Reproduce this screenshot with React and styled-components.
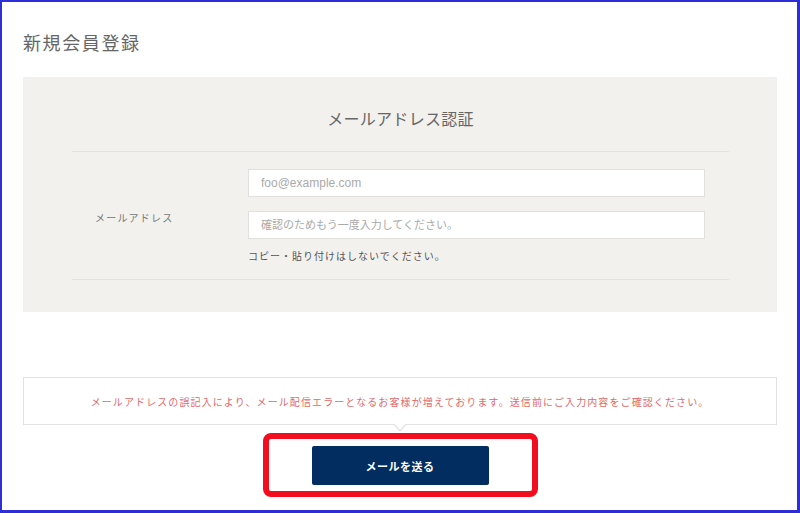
import React from "react";
import styled, { createGlobalStyle } from "styled-components";

const GlobalStyle = createGlobalStyle`
  html, body { margin: 0; padding: 0; background: #ffffff; }
  * { box-sizing: border-box; }
`;

const Frame = styled.div`
  width: 800px;
  height: 513px;
  border-style: solid;
  border-color: #2e2ed8;
  border-width: 2px 3px 3px 2px;
  padding: 0 20px 0 21px;
  font-family: "Liberation Sans", "Noto Sans CJK JP", sans-serif;
  color: #555;
  overflow: hidden;
`;

const Title = styled.h1`
  margin: 29px 0 20px 0;
  font-size: 18px;
  line-height: 26px;
  font-weight: normal;
  letter-spacing: 1.6px;
  color: #666;
`;

const Panel = styled.section`
  background: #f2f1ee;
  height: 235px;
  padding: 31px 48px 0 49px;
`;

const PanelHeading = styled.h2`
  margin: 0 0 19px 0;
  font-size: 16px;
  line-height: 24px;
  font-weight: normal;
  text-align: center;
  letter-spacing: 0.3px;
  color: #666;
`;

const FieldRow = styled.div`
  display: flex;
  align-items: center;
  border-top: 1px solid #e4e2df;
  border-bottom: 1px solid #e4e2df;
  padding: 17px 24px 14px 0;
`;

const Label = styled.div`
  width: 176px;
  padding-left: 23px;
  font-size: 10px;
  letter-spacing: 1.2px;
  color: #777;
`;

const Inputs = styled.div`
  flex: 1;
  display: flex;
  flex-direction: column;
  gap: 14px;
`;

const TextInput = styled.input`
  width: 100%;
  height: 28px;
  border: 1px solid #e2e0dc;
  background: #fff;
  padding: 0 12px;
  font-family: "Liberation Sans", "Noto Sans CJK JP", sans-serif;
  font-size: ${(p) => p.$size}px;
  color: #333;
  outline: none;
  &::placeholder { color: #aaa; }
`;

const Note = styled.p`
  margin: -4px 0 0 0;
  font-size: 10px;
  line-height: 16px;
  letter-spacing: 1px;
  color: #555;
`;

const Notice = styled.div`
  position: relative;
  margin-top: 65px;
  height: 48px;
  border: 1px solid #e3e3e3;
  display: flex;
  align-items: center;
  justify-content: center;
  font-size: 10px;
  letter-spacing: 1.1px;
  color: #e26a6a;

  &::before, &::after {
    content: "";
    position: absolute;
    left: 50%;
    transform: translateX(-50%);
    width: 0;
    height: 0;
    border-style: solid;
  }
  &::before {
    bottom: -8px;
    border-width: 8px 7px 0 7px;
    border-color: #e3e3e3 transparent transparent transparent;
  }
  &::after {
    bottom: -6px;
    border-width: 7px 6px 0 6px;
    border-color: #fff transparent transparent transparent;
  }
`;

const Actions = styled.div`
  display: flex;
  justify-content: center;
  margin-top: 8px;
`;

const Highlight = styled.div`
  border: 6px solid #f20d1f;
  border-radius: 8px;
  padding: 7px 43px 6px 43px;
`;

const SendButton = styled.button`
  width: 177px;
  height: 39px;
  border: none;
  border-radius: 2px;
  background: #022d60;
  color: #fff;
  font-family: "Liberation Sans", "Noto Sans CJK JP", sans-serif;
  font-size: 11px;
  font-weight: bold;
  letter-spacing: 0.5px;
  cursor: pointer;
`;

export default function App() {
  return (
    <>
      <GlobalStyle />
      <Frame>
        <Title>新規会員登録</Title>
        <Panel>
          <PanelHeading>メールアドレス認証</PanelHeading>
          <FieldRow>
            <Label>メールアドレス</Label>
            <Inputs>
              <TextInput $size={12} type="email" placeholder="foo@example.com" />
              <TextInput $size={11} type="email" placeholder="確認のためもう一度入力してください。" />
              <Note>コピー・貼り付けはしないでください。</Note>
            </Inputs>
          </FieldRow>
        </Panel>
        <Notice>
          メールアドレスの誤記入により、メール配信エラーとなるお客様が増えております。送信前にご入力内容をご確認ください。
        </Notice>
        <Actions>
          <Highlight>
            <SendButton>メールを送る</SendButton>
          </Highlight>
        </Actions>
      </Frame>
    </>
  );
}
